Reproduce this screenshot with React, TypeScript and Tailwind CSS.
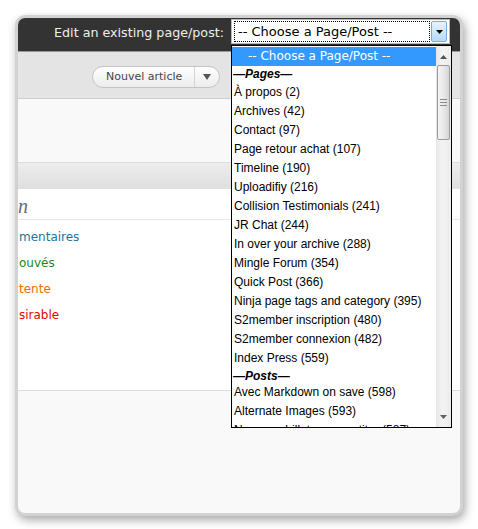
const options = [
  "À propos (2)",
  "Archives (42)",
  "Contact (97)",
  "Page retour achat (107)",
  "Timeline (190)",
  "Uploadifiy (216)",
  "Collision Testimonials (241)",
  "JR Chat (244)",
  "In over your archive (288)",
  "Mingle Forum (354)",
  "Quick Post (366)",
  "Ninja page tags and category (395)",
  "S2member inscription (480)",
  "S2member connexion (482)",
  "Index Press (559)",
];

const posts = ["Avec Markdown on save (598)", "Alternate Images (593)", "Nouveau billet avec un titre (587)"];

function Option({ label }: { label: string }) {
  return <div className="h-[19px] pl-[2px] leading-[19px] whitespace-nowrap text-black">{label}</div>;
}

function Group({ label, h }: { label: string; h: string }) {
  return <div className={`${h} pl-[1px] leading-[17px] font-bold italic text-black`}>{label}</div>;
}

function Listbox() {
  return (
    <div className="absolute left-[213px] top-[27px] flex h-[383px] w-[221px] overflow-hidden border border-black bg-white font-['Liberation_Sans',Arial,sans-serif] text-[12px]">
      <div className="w-[204px] overflow-hidden pt-px">
        <div className="h-[19px] bg-[#3399ff] pl-[16px] font-['DejaVu_Sans',Verdana,sans-serif] text-[12px] leading-[19px] text-white">
          -- Choose a Page/Post --
        </div>
        <Group label="—Pages—" h="h-[17px]" />
        {options.map((o) => (
          <Option key={o} label={o} />
        ))}
        <Group label="—Posts—" h="h-[15px]" />
        {posts.map((o) => (
          <Option key={o} label={o} />
        ))}
      </div>
      {/* scrollbar */}
      <div className="flex w-[15px] flex-col bg-[linear-gradient(90deg,#e6e6e6,#f3f3f3_40%,#ececec)]">
        <div className="flex h-[19px] items-center justify-center pt-[3px]">
          <svg width="7" height="4" viewBox="0 0 7 4">
            <path d="M0 4 L3.5 0 L7 4 Z" fill="#505050" />
          </svg>
        </div>
        <div className="mx-[1px] flex h-[75px] flex-col items-center justify-center gap-[2px] rounded-[2px] border border-[#9a9a9a] bg-[linear-gradient(90deg,#f5f5f5,#e9e9e9_50%,#d6d6d6)]">
          <div className="h-px w-[7px] bg-[#8a8a8a]" />
          <div className="h-px w-[7px] bg-[#8a8a8a]" />
          <div className="h-px w-[7px] bg-[#8a8a8a]" />
        </div>
        <div className="flex-1" />
        <div className="flex h-[18px] items-center justify-center pb-[2px]">
          <svg width="7" height="4" viewBox="0 0 7 4">
            <path d="M0 0 L3.5 4 L7 0 Z" fill="#606060" />
          </svg>
        </div>
      </div>
    </div>
  );
}

export default function App() {
  return (
    <div className="h-[529px] w-[478px] bg-white pl-[15px] pt-[15px]">
      <div className="relative h-[501px] w-[448px] overflow-hidden rounded-[10px] border-[3px] border-[#d2d2d2] bg-[#f9f9f9] shadow-[2px_4px_10px_rgba(0,0,0,0.35)]">
        {/* header */}
        <div className="flex h-[33px] items-start justify-end gap-[7px] bg-[#333333] pr-[10px] pt-[1px]">
          <span className="mt-[4px] font-['DejaVu_Sans',Verdana,sans-serif] text-[12.7px] text-[#eeeeee]">
            Edit an existing page/post:
          </span>
          <div className="flex h-[25px] w-[219px] items-center border border-[#b8b8b8] bg-white px-[2px]">
            <div className="flex h-[21px] flex-1 items-center border border-dotted border-black pl-[3px] font-['DejaVu_Sans',Verdana,sans-serif] text-[13px] text-black">
              -- Choose a Page/Post --
            </div>
            <div className="ml-px flex h-[21px] w-[16px] items-center justify-center rounded-[2px] border border-[#7eaad8] bg-[linear-gradient(180deg,#e6f3fd,#b6dafa)]">
              <svg width="7" height="4" viewBox="0 0 7 4">
                <path d="M0 0 L3.5 4 L7 0 Z" fill="#000" />
              </svg>
            </div>
          </div>
        </div>
        <div className="h-px bg-[#9a9a9a]" />
        {/* toolbar */}
        <div className="h-[47px] border-b border-[#cfcfcf] bg-[#e4e4e4] pl-[74px] pt-[14px]">
          <div className="flex h-[22px] w-[128px] items-center rounded-full border border-[#c4c4c4] bg-[linear-gradient(180deg,#fefefe,#ededed)] font-['DejaVu_Sans',Verdana,sans-serif] text-[11px] text-[#464646]">
            <span className="pl-[13px] pr-[12px]">Nouvel article</span>
            <div className="h-full w-px bg-[#d4d4d4]" />
            <span className="flex flex-1 justify-center">
              <svg width="8" height="6" viewBox="0 0 8 6">
                <path d="M0 0 L4 6 L8 0 Z" fill="#555" />
              </svg>
            </span>
          </div>
        </div>
        {/* body */}
        <div className="h-[63px]" />
        <div className="h-[27px] border-t border-[#dcdcdc] bg-[linear-gradient(180deg,#ececec,#dfdfdf)]" />
        <div className="flex h-[31px] items-center border-b border-[#e6e6e6] bg-white pt-[3px]">
          <span className="font-['Liberation_Serif',Georgia,serif] text-[20px] italic text-[#5f6b78]">n</span>
        </div>
        <div className="h-[171px] border-b border-[#dcdcdc] bg-white pl-px pt-[4px] font-['DejaVu_Sans',Verdana,sans-serif] text-[12px] leading-[26px]">
          <div className="text-[#21759b]">mentaires</div>
          <div className="text-[#1a8a16]">ouvés</div>
          <div className="text-[#e66f00]">tente</div>
          <div className="text-[#ee0000]">sirable</div>
        </div>
        <Listbox />
      </div>
    </div>
  );
}
